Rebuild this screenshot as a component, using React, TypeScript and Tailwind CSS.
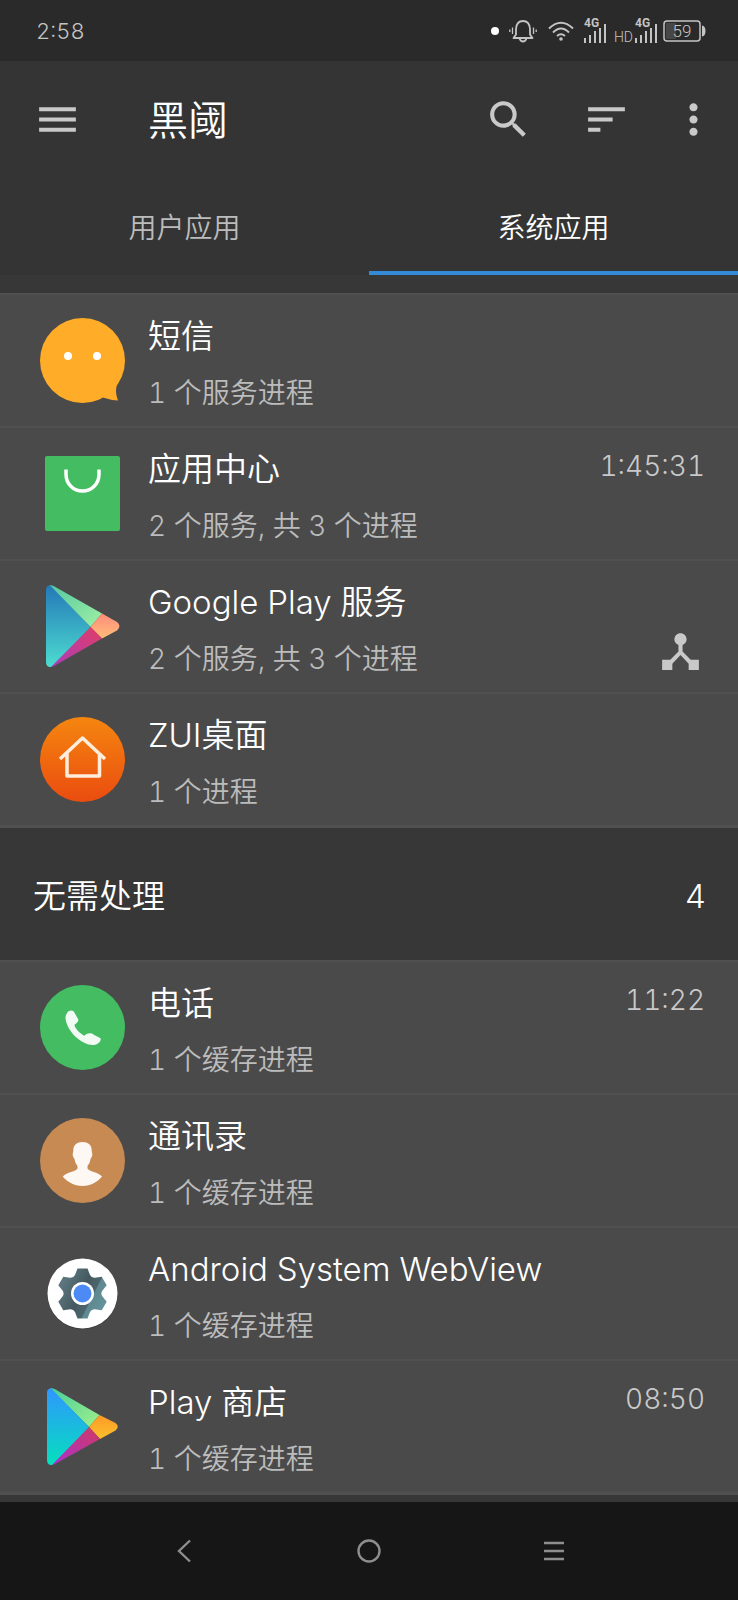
import { useState } from 'react';
import type { ReactNode } from 'react';
import { MdDeviceHub, MdMenu, MdMoreVert, MdSearch, MdSort } from 'react-icons/md';

type App = {
  name: string;
  detail: string;
  icon: ReactNode;
  time?: string;
  linked?: boolean;
};

function MessageIcon() {
  return (
    <svg viewBox="0 0 85 85" className="size-[85px]" aria-hidden="true">
      <circle cx="42.5" cy="42.5" r="42.5" fill="#ffac28" />
      <path d="M80 60C74 70 76 77 78 82.500Q70 82 63 79.500L60 70Z" fill="#ffac28" />
      <circle cx="28" cy="38" r="4" fill="#fff" />
      <circle cx="57" cy="38" r="4" fill="#fff" />
    </svg>
  );
}

function StoreIcon() {
  return (
    <svg viewBox="0 0 85 85" className="size-[85px]" aria-hidden="true">
      <rect x="5" y="5" width="75" height="75" rx="2" fill="#43bc62" />
      <path d="M26 18.500V23.500A16.500 16.500 0 0 0 59 23.500V18.500" fill="none" stroke="#fff" strokeWidth="3.500" />
    </svg>
  );
}

function PlayServicesIcon() {
  return (
    <svg viewBox="0 0 85 85" className="size-[85px]" aria-hidden="true">
      <defs>
        <linearGradient id="svcBlue" x1="0" y1="0" x2="0" y2="1">
          <stop offset="0" stopColor="#2478b8" />
          <stop offset="1" stopColor="#4ddcd0" />
        </linearGradient>
        <linearGradient id="svcGreen" x1="0" y1="0" x2="1" y2="1">
          <stop offset="0" stopColor="#55c8a0" />
          <stop offset="1" stopColor="#9ff0a4" />
        </linearGradient>
        <linearGradient id="svcOrange" x1="0" y1="0" x2="0" y2="1">
          <stop offset="0" stopColor="#ff8c7c" />
          <stop offset="1" stopColor="#ffbc78" />
        </linearGradient>
        <linearGradient id="svcRed" x1="1" y1="0" x2="0" y2="1">
          <stop offset="0" stopColor="#e23d63" />
          <stop offset="1" stopColor="#a83cc0" />
        </linearGradient>
      </defs>
      <path d="M9 1.500Q11 0.500 14 2.200L62 29.500L50.500 43Z" fill="url(#svcGreen)" />
      <path d="M62 29.500L77 38Q82 42 77 46.500L62 54.500L50.500 43Z" fill="url(#svcOrange)" />
      <path d="M50.500 43L62 54.500L14 82Q11 83.500 9 82Z" fill="url(#svcRed)" />
      <path d="M10 1.200L50.500 43L11 83Q6 83.500 6 78V6Q6 1.500 10 1.200Z" fill="url(#svcBlue)" />
    </svg>
  );
}

function PlayStoreIcon() {
  return (
    <svg viewBox="0 0 85 85" className="size-[85px]" aria-hidden="true">
      <defs>
        <linearGradient id="storeBlue" x1="0" y1="0" x2="0" y2="1">
          <stop offset="0" stopColor="#2f96ff" />
          <stop offset="1" stopColor="#05e0bd" />
        </linearGradient>
        <linearGradient id="storeGreen" x1="0" y1="0" x2="1" y2="1">
          <stop offset="0" stopColor="#48cf98" />
          <stop offset="1" stopColor="#a0f08c" />
        </linearGradient>
        <linearGradient id="storeOrange" x1="0" y1="0" x2="0" y2="1">
          <stop offset="0" stopColor="#ff9a26" />
          <stop offset="1" stopColor="#fbc02d" />
        </linearGradient>
        <linearGradient id="storeRed" x1="1" y1="0" x2="0" y2="1">
          <stop offset="0" stopColor="#d03a62" />
          <stop offset="1" stopColor="#a92fd0" />
        </linearGradient>
      </defs>
      <path d="M10 4.500Q12 3.500 15 5.200L59.500 31L49 43Z" fill="url(#storeGreen)" />
      <path d="M59.500 31L75.500 39Q80 42.500 75.500 46.500L60 55L49 43Z" fill="url(#storeOrange)" />
      <path d="M49 43L60 55L15 80Q12 81.500 10 80Z" fill="url(#storeRed)" />
      <path d="M11 4.200L49 43L12 81Q7 81.500 7 76V9Q7 4.500 11 4.200Z" fill="url(#storeBlue)" />
    </svg>
  );
}

function LauncherIcon() {
  return (
    <svg viewBox="0 0 85 85" className="size-[85px]" aria-hidden="true">
      <defs>
        <linearGradient id="launcher" x1="0" y1="0" x2="0" y2="1">
          <stop offset="0" stopColor="#f5860f" />
          <stop offset="1" stopColor="#ea4c0f" />
        </linearGradient>
      </defs>
      <circle cx="42.500" cy="42.500" r="42.500" fill="url(#launcher)" />
      <g fill="none" stroke="#ffeddc" strokeWidth="3.500" strokeLinejoin="round">
        <path d="M20 42L42.500 21L65 42" />
        <path d="M27 36V59H59.500V36" />
      </g>
    </svg>
  );
}

function PhoneIcon() {
  return (
    <svg viewBox="0 0 85 85" className="size-[85px]" aria-hidden="true">
      <circle cx="42.500" cy="42.500" r="42.500" fill="#43bc62" />
      <path
        d="M27.200 27.700C28.800 25 33.200 24.300 34.500 27.700L38.200 34.300C38.800 36.700 36.500 38.300 34.500 39.700C34.500 43.300 40.500 49 44.500 50.700C47.200 47.700 51.200 47.700 53.800 49.700L60.500 53.200C61.500 55.700 58.800 59.300 53.800 60C43.800 61 27.200 48.300 25.500 33.300C25.500 31 26 29.500 27.200 27.700Z"
        fill="#f1fbf3"
      />
    </svg>
  );
}

function ContactsIcon() {
  return (
    <svg viewBox="0 0 85 85" className="size-[85px]" aria-hidden="true">
      <circle cx="42.500" cy="42.500" r="42.500" fill="#c78a52" />
      <path
        d="M42.500 24C48 24 52 27 51.700 33L52.300 36C52.300 39 51 40 50.500 41C50 45 48 47 47.500 48V50.500C49 53.500 58 54 62 58.500C57 65 49 68 42.500 68C36 68 28 65 22.700 58.500C27 54 36 53.500 37.500 50.500V48C37 47 35 45 34.500 41C34 40 32.700 39 32.700 36L33.300 33C33 27 37 24 42.500 24Z"
        fill="#fdf8f4"
      />
    </svg>
  );
}

function WebViewIcon() {
  return (
    <svg viewBox="0 0 85 85" className="size-[85px]" aria-hidden="true">
      <defs>
        <linearGradient id="gear" gradientUnits="userSpaceOnUse" x1="-20" y1="-8" x2="20" y2="12">
          <stop offset="0" stopColor="#5b747d" />
          <stop offset="0.45" stopColor="#44595f" />
          <stop offset="0.7" stopColor="#4c666e" />
          <stop offset="0.72" stopColor="#5f8890" />
          <stop offset="1" stopColor="#64929a" />
        </linearGradient>
      </defs>
      <circle cx="42.500" cy="43.500" r="35" fill="#333" opacity="0.500" />
      <circle cx="42.500" cy="42.500" r="35" fill="#fff" />
      <g transform="translate(42.500 42.500)">
        <path
          d="M-5 -25H5L7.500 -18.500Q9 -15.500 12.300 -15.700L19.200 -16.800L24.200 -8.200L19.800 -2.800Q18 0 19.800 2.800L24.200 8.200L19.200 16.800L12.300 15.700Q9 15.500 7.500 18.500L5 25H-5L-7.500 18.500Q-9 15.500 -12.300 15.700L-19.200 16.800L-24.200 8.200L-19.800 2.800Q-18 0 -19.800 -2.800L-24.200 -8.200L-19.200 -16.800L-12.300 -15.700Q-9 -15.500 -7.500 -18.500Z"
          fill="url(#gear)"
        />
        <circle r="11.500" fill="#fff" />
        <circle r="9" fill="#4c8bf5" />
      </g>
    </svg>
  );
}

const runningApps: App[] = [
  { name: '短信', detail: '1 个服务进程', icon: <MessageIcon /> },
  { name: '应用中心', detail: '2 个服务, 共 3 个进程', icon: <StoreIcon />, time: '1:45:31' },
  { name: 'Google Play 服务', detail: '2 个服务, 共 3 个进程', icon: <PlayServicesIcon />, linked: true },
  { name: 'ZUI桌面', detail: '1 个进程', icon: <LauncherIcon /> },
];

const idleApps: App[] = [
  { name: '电话', detail: '1 个缓存进程', icon: <PhoneIcon />, time: '11:22' },
  { name: '通讯录', detail: '1 个缓存进程', icon: <ContactsIcon /> },
  { name: 'Android System WebView', detail: '1 个缓存进程', icon: <WebViewIcon /> },
  { name: 'Play 商店', detail: '1 个缓存进程', icon: <PlayStoreIcon />, time: '08:50' },
];

function SignalBars() {
  return (
    <svg viewBox="0 0 22 32" className="h-8 w-[22px]" fill="#c4c4c4" aria-hidden="true">
      <text x="0" y="12" fontSize="12" fontWeight="700" fontFamily="Roboto, sans-serif">
        4G
      </text>
      <rect x="0" y="23" width="2" height="5" />
      <rect x="5" y="20" width="2" height="8" />
      <rect x="10" y="16" width="2" height="12" />
      <rect x="15" y="13" width="2" height="15" />
      <rect x="20" y="9" width="2" height="19" />
    </svg>
  );
}

function StatusBar() {
  return (
    <div className="flex h-[61px] items-center justify-between bg-[#2a2a2a] pr-8 pl-9 text-[#c4c4c4]">
      <span className="pt-[2px] text-[22px]">2:58</span>
      <div className="flex items-center">
        <span className="size-2 rounded-full bg-white" />
        <svg viewBox="0 0 28 24" className="ml-[10px] h-6 w-7" fill="none" stroke="#c4c4c4" strokeWidth="1.800" aria-hidden="true">
          <path d="M4.500 19H23.500L21 15.500V10Q20.500 2 14 2Q7.500 2 7 10V15.500Z" strokeLinejoin="round" />
          <path d="M10.500 19.500Q11.500 22.500 14 22.500Q16.500 22.500 17.500 19.500" />
          <path d="M3.500 8.500V15M24.500 8.500V15M0.800 10.500V13M27.200 10.500V13" strokeWidth="1.300" />
        </svg>
        <svg viewBox="0 0 26 20" className="ml-[11px] h-5 w-[26px]" fill="none" stroke="#c4c4c4" strokeWidth="2" aria-hidden="true">
          <path d="M1 7.500Q13 -4 25 7.500M5 11.500Q13 3.500 21 11.500M9 15Q13 11.500 17 15" />
          <circle cx="13" cy="18" r="1.800" fill="#c4c4c4" stroke="none" />
        </svg>
        <div className="ml-[10px]">
          <SignalBars />
        </div>
        <span className="ml-2 self-end pb-1 font-['Liberation_Sans_Narrow','Roboto',sans-serif] text-sm leading-3">HD</span>
        <div className="ml-[2px]">
          <SignalBars />
        </div>
        <svg viewBox="0 0 43 22" className="ml-[6px] h-[22px] w-[43px]" aria-hidden="true">
          <rect x="1" y="1" width="36" height="20" rx="3" fill="none" stroke="#c4c4c4" strokeWidth="1.500" />
          <rect x="3" y="3" width="10" height="16" rx="1" fill="#474747" />
          <path d="M39 5.500Q42.500 6 42.500 11Q42.500 16 39 16.500Z" fill="#c4c4c4" />
          <text x="19" y="17" fontSize="17" textAnchor="middle" fill="#c4c4c4" fontFamily="Roboto, sans-serif">
            59
          </text>
        </svg>
      </div>
    </div>
  );
}

function AppRow({ app }: { app: App }) {
  return (
    <li className="flex h-[133px] items-center border-b-2 border-[#505050] pr-[33px] pl-10">
      {app.icon}
      <div className="ml-[23px] min-w-0 flex-1 pt-2">
        <h3 className="truncate text-[33px] leading-[57px] text-white">{app.name}</h3>
        <p className="truncate text-[28px] leading-[57px] text-[#bcbcbc]">{app.detail}</p>
      </div>
      <div className="flex h-[106px] flex-col items-end justify-between pb-1">
        <span className="text-[28px] leading-[51px] text-[#c9c9c9]">{app.time}</span>
        {app.linked && <MdDeviceHub className="size-[49px] text-[#c9c9c9]" />}
      </div>
    </li>
  );
}

function AppList({ apps }: { apps: App[] }) {
  return (
    <ul className="border-t-2 border-b border-[#505050] bg-[#4a4a4a]">
      {apps.map((app) => (
        <AppRow key={app.name} app={app} />
      ))}
    </ul>
  );
}

const tabs = ['用户应用', '系统应用'];

export default function App() {
  const [activeTab, setActiveTab] = useState(1);

  return (
    <div className="flex min-h-screen flex-col bg-[#373737] font-['Inter','Noto_Sans_CJK_SC',sans-serif] font-[350] tabular-nums">
      <StatusBar />

      <header className="bg-[#343434]">
        <div className="flex h-[116px] items-center pr-5 pl-[33px] text-[#c9c9c9]">
          <button aria-label="菜单">
            <MdMenu className="size-[49px]" />
          </button>
          <h1 className="ml-[66px] flex-1 pt-1 text-[40px] text-white">黑阈</h1>
          <button aria-label="搜索">
            <MdSearch className="size-[49px]" />
          </button>
          <button aria-label="排序" className="ml-[49px]">
            <MdSort className="size-[49px]" />
          </button>
          <button aria-label="更多" className="ml-[38px]">
            <MdMoreVert className="size-[49px]" />
          </button>
        </div>
        <div role="tablist" className="flex">
          {tabs.map((tab, index) => (
            <button
              key={tab}
              role="tab"
              aria-selected={activeTab === index}
              onClick={() => setActiveTab(index)}
              className={`h-[98px] flex-1 border-b-4 pt-2 text-[28px] ${
                activeTab === index ? 'border-[#338bd8] text-white' : 'border-transparent text-[#bcbcbc]'
              }`}
            >
              {tab}
            </button>
          ))}
        </div>
      </header>

      <main className="flex-1 pt-[18px] pb-[7px]">
        <AppList apps={runningApps} />
        <div className="flex h-[132px] items-center justify-between pt-[6px] pr-8 pl-[33px] text-[33px] text-white">
          <h2>无需处理</h2>
          <span>{idleApps.length}</span>
        </div>
        <AppList apps={idleApps} />
      </main>

      <nav className="flex h-[98px] items-center bg-[#161616] px-[12.5%] text-[#8e8e8e]">
        <button aria-label="返回" className="flex flex-1 justify-center">
          <svg viewBox="0 0 24 24" className="size-6" fill="none" stroke="currentColor" strokeWidth="2.400">
            <path d="M17 1.500L6 12L17 22.500" />
          </svg>
        </button>
        <button aria-label="主页" className="flex flex-1 justify-center">
          <svg viewBox="0 0 24 24" className="size-6" fill="none" stroke="currentColor" strokeWidth="2.400">
            <circle cx="12" cy="12" r="10.500" />
          </svg>
        </button>
        <button aria-label="最近任务" className="flex flex-1 justify-center">
          <svg viewBox="0 0 24 24" className="size-6" fill="none" stroke="currentColor" strokeWidth="2.400">
            <path d="M2 4H22M2 12H22M2 20H22" />
          </svg>
        </button>
      </nav>
    </div>
  );
}
